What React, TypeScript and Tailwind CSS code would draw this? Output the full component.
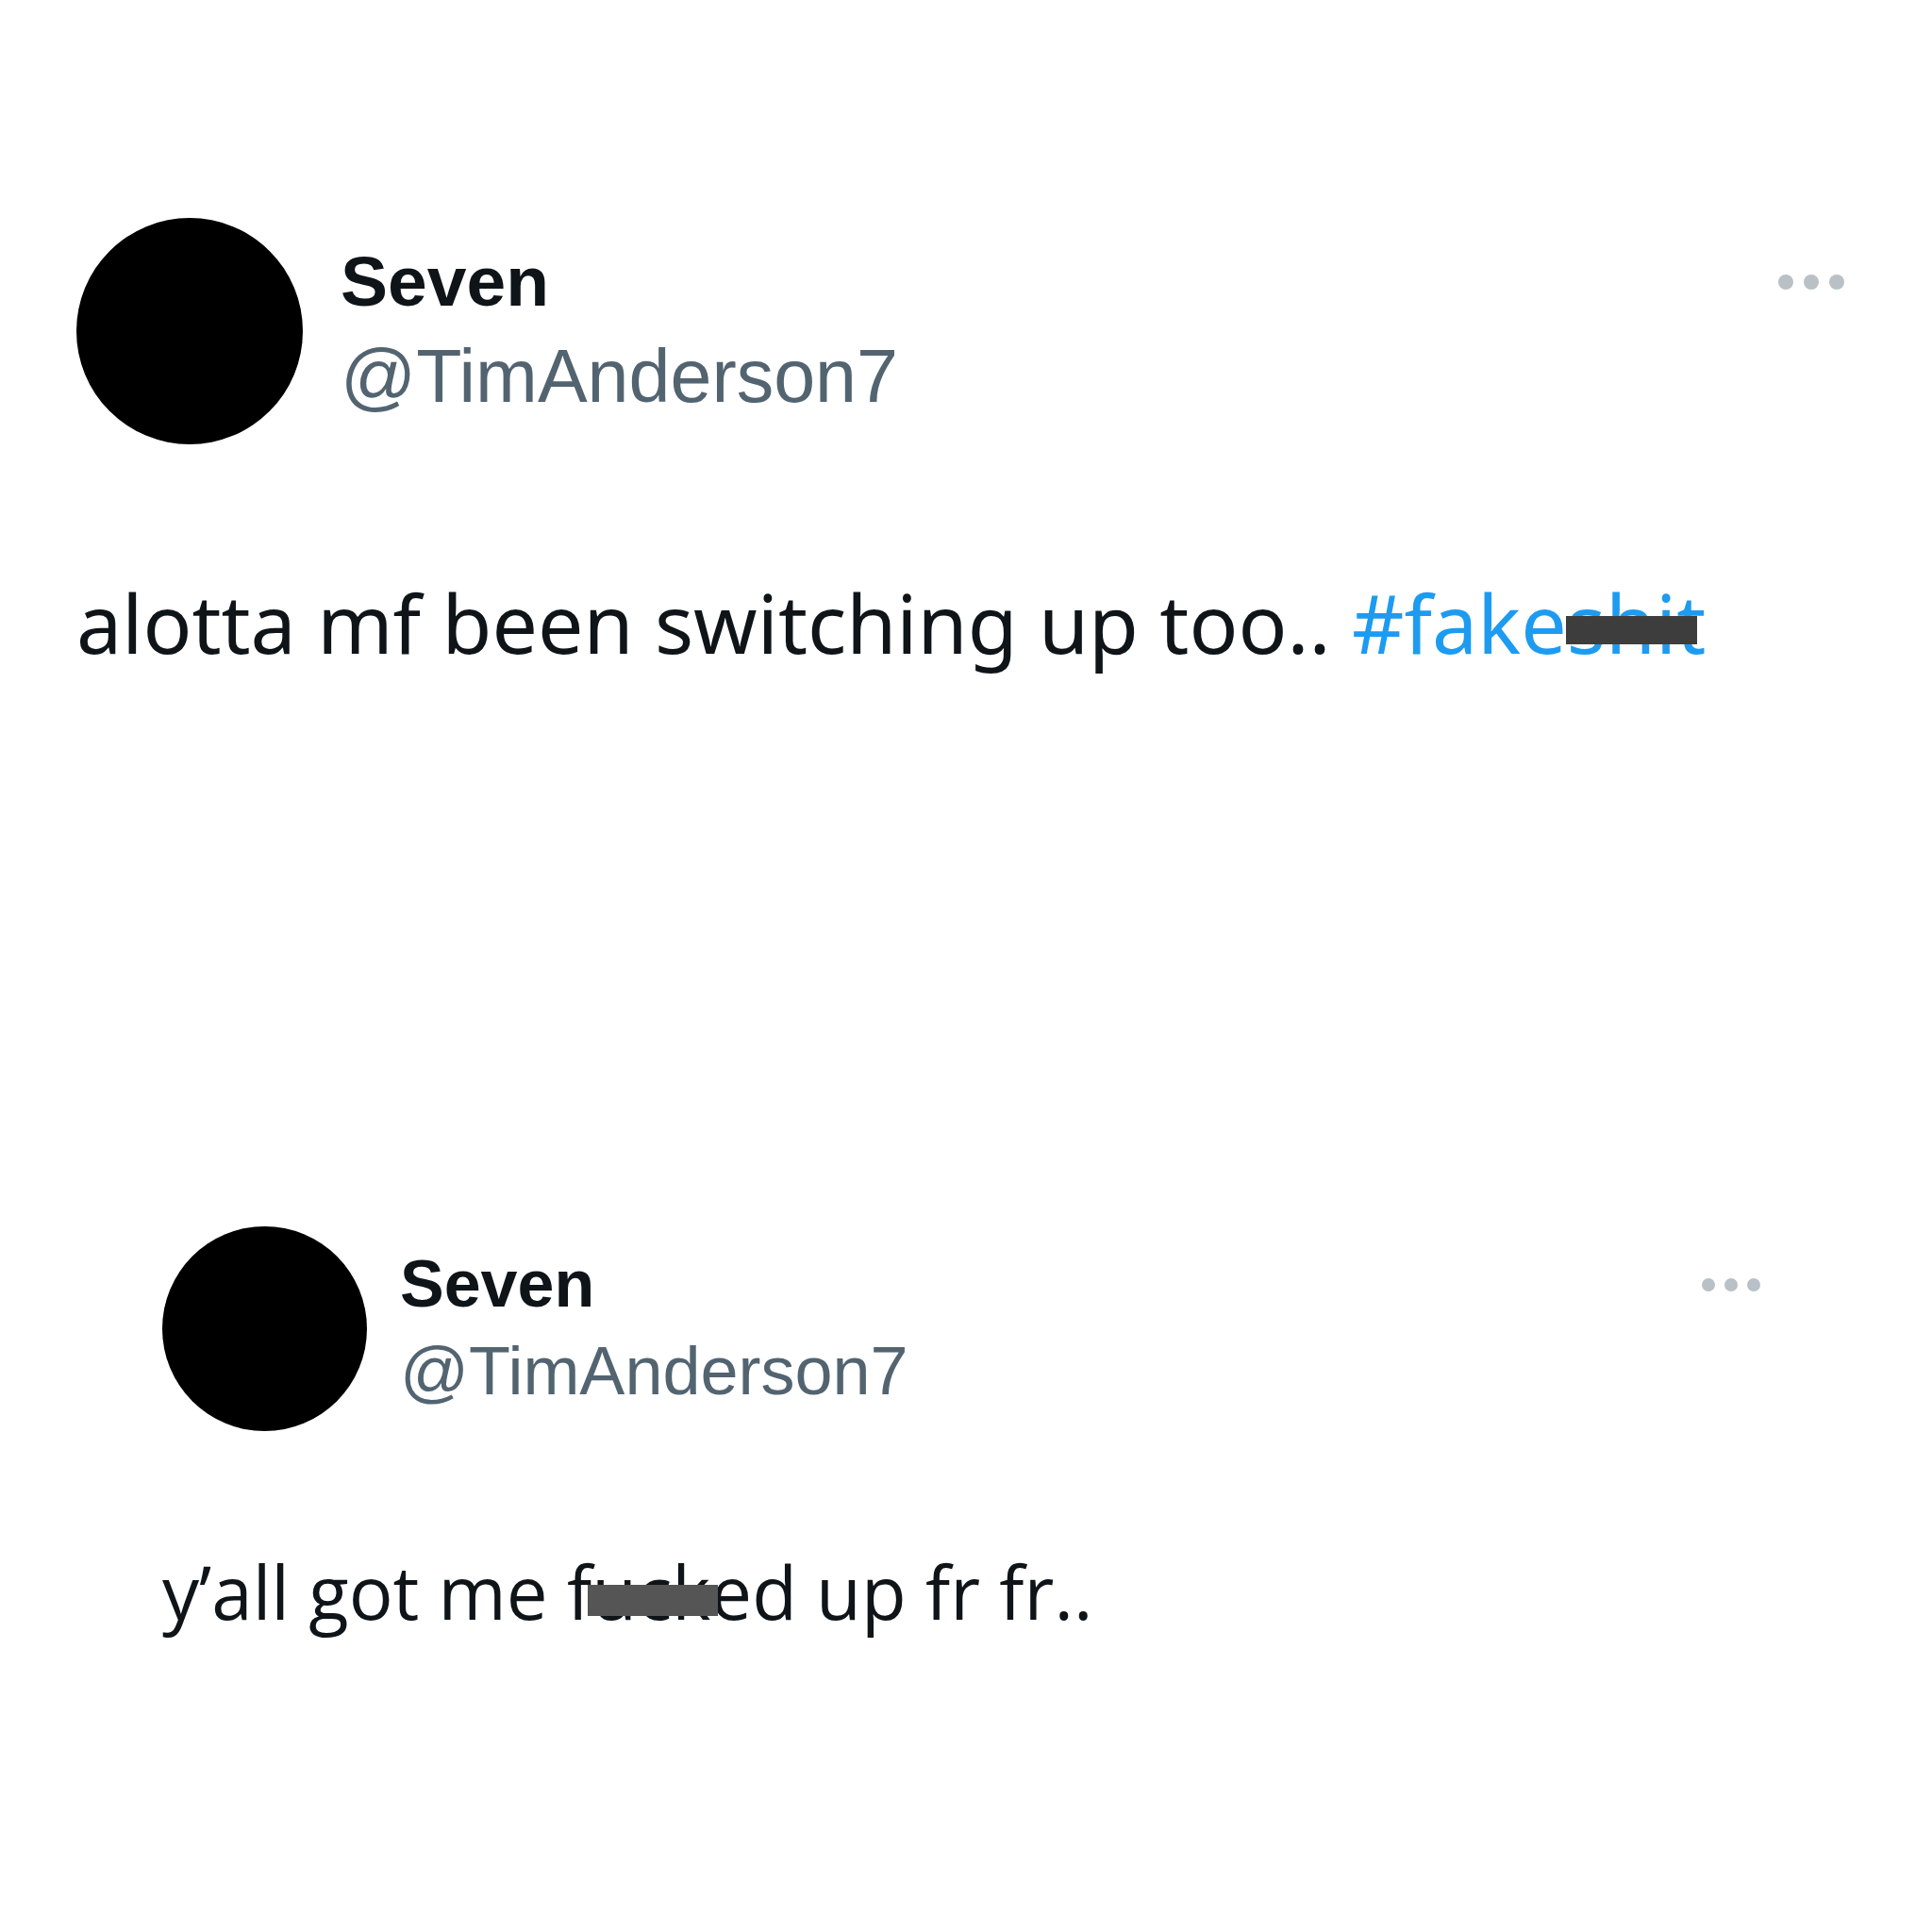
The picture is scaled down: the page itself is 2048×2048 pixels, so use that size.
import React from 'react';

function Dots({ size, gap }: { size: string; gap: string }) {
  return (
    <div className={`flex ${gap}`}>
      <span className={`${size} rounded-full bg-[#b9c1c6]`} />
      <span className={`${size} rounded-full bg-[#b9c1c6]`} />
      <span className={`${size} rounded-full bg-[#b9c1c6]`} />
    </div>
  );
}

const headFont = { fontFamily: '"Liberation Sans", Arial, sans-serif' };

export default function App() {
  return (
    <div className="min-h-screen w-full bg-white text-[#0f1419]">
      {/* first tweet */}
      <div className="pt-[231px] pl-[81px] pr-[93px]">
        <div className="flex items-start justify-between">
          <div className="flex items-start gap-[40px]">
            <div className="w-[240px] h-[240px] rounded-full bg-black shrink-0" />
            <div className="flex flex-col pt-[30px]" style={headFont}>
              <span className="text-[75px] leading-none font-bold">Seven</span>
              <span className="mt-[23px] text-[79px] leading-none text-[#536471]">@TimAnderson7</span>
            </div>
          </div>
          <div className="mt-[60px]">
            <Dots size="w-[16px] h-[16px]" gap="gap-[11px]" />
          </div>
        </div>
        <p
          className="mt-[146px] text-[86px] leading-none whitespace-nowrap"
          style={{ fontFamily: '"Noto Sans", "Open Sans", sans-serif' }}
        >
          alotta mf been switching up too..{' '}
          <span className="text-[#1d9bf0]">
            #fake
            <span className="relative">
              shit
              <span className="absolute left-[-1px] right-[9px] top-[52px] h-[30px] bg-[#3d3d3d]" />
            </span>
          </span>
        </p>
      </div>

      {/* second tweet */}
      <div className="mt-[597px] pl-[172px] pr-[182px] pb-[200px]">
        <div className="flex items-start justify-between">
          <div className="flex items-start gap-[35px]">
            <div className="w-[217px] h-[217px] rounded-full bg-black shrink-0" />
            <div className="flex flex-col pt-[26px]" style={headFont}>
              <span className="text-[70px] leading-none font-bold">Seven</span>
              <span className="mt-[21px] text-[72px] leading-none text-[#536471]">@TimAnderson7</span>
            </div>
          </div>
          <div className="mt-[55px]">
            <Dots size="w-[14px] h-[14px]" gap="gap-[10px]" />
          </div>
        </div>
        <p
          className="mt-[131px] text-[78px] leading-none whitespace-nowrap"
          style={{ fontFamily: '"Open Sans", "Noto Sans", sans-serif' }}
        >
          y’all got me f
          <span className="relative">
            uck
            <span className="absolute left-[-4px] right-[-8px] top-[46px] h-[33px] bg-[#555555]" />
          </span>
          ed up fr fr..
        </p>
      </div>
    </div>
  );
}
